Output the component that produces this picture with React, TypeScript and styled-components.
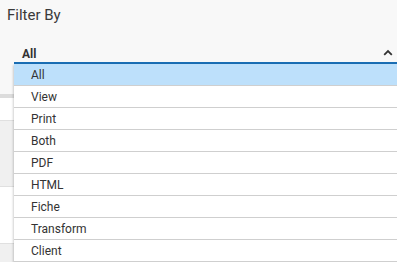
import React from "react";
import styled, { createGlobalStyle } from "styled-components";

const options = ["All", "View", "Print", "Both", "PDF", "HTML", "Fiche", "Transform", "Client"];

const GlobalStyle = createGlobalStyle`
    html, body {
        margin: 0;
        padding: 0;
        background: #f8f8f8;
        font-family: Roboto, "Liberation Sans", sans-serif;
        color: #333;
    }
`;

export default function App() {
    const selected = "All";
    return (
        <>
            <GlobalStyle />
            <Page>
                <Title>Filter By</Title>
                <Field>
                    <SelectBox>
                        <SelectValue>{selected}</SelectValue>
                        <Caret width="10" height="7" viewBox="0 0 10 7">
                            <path d="M1.2 5.8 L5 2 L8.8 5.8" fill="none" stroke="#333" strokeWidth="1.8" />
                        </Caret>
                    </SelectBox>
                    <Listbox>
                        {options.map((o) => (
                            <Option key={o} $active={o === selected}>{o}</Option>
                        ))}
                    </Listbox>
                </Field>
                <Content>
                    <Band />
                    <Row $tone="white" $h={22} />
                    <Row $tone="grey" $h={65} />
                    <Row $tone="white" $h={56} />
                    <Row $tone="grey" $h={22} />
                </Content>
            </Page>
        </>
    );
}

const Page = styled.div`
    width: 397px;
    height: 262px;
    overflow: hidden;
    display: flex;
    flex-direction: column;
`;

const Title = styled.div`
    padding: 6px 0 0 7px;
    height: 25px;
    font-size: 15px;
    line-height: 18px;
    color: #3a3a3a;
`;

const Field = styled.div`
    position: relative;
    margin: 0 0 0 14px;
    padding-top: 20px;
`;

const SelectBox = styled.div`
    height: 18px;
    display: flex;
    align-items: center;
    justify-content: space-between;
    padding: 0 4px 0 8px;
    border-bottom: 2px solid #1a6eb4;
`;

const SelectValue = styled.span`
    font-size: 12px;
    font-weight: 700;
    color: #333;
    line-height: 14px;
    padding-top: 2px;
`;

const Caret = styled.svg`
    display: block;
    margin-top: -2px;
`;

const Listbox = styled.ul`
    position: absolute;
    top: 100%;
    left: 0;
    right: 0;
    margin: 0;
    padding: 0;
    list-style: none;
    background: #fff;
    box-shadow: -1px 1px 2px rgba(0, 0, 0, 0.18);
    z-index: 2;
`;

const Option = styled.li<{ $active?: boolean }>`
    height: 21px;
    display: flex;
    align-items: center;
    padding-left: 17px;
    font-size: 12px;
    color: #333;
    background: ${(p) => (p.$active ? "#bde0fb" : "#fff")};
    border-bottom: 1px solid #cfcfcf;
`;

const Content = styled.div`
    margin-top: 30px;
    display: flex;
    flex-direction: column;
`;

const Band = styled.div`
    height: 4px;
    background: #dcdcdc;
`;

const Row = styled.div<{ $tone: "white" | "grey"; $h: number }>`
    height: ${(p) => p.$h}px;
    background: ${(p) => (p.$tone === "white" ? "#fff" : "#f0f0f0")};
    border-bottom: 1px solid #e0e0e0;
`;
